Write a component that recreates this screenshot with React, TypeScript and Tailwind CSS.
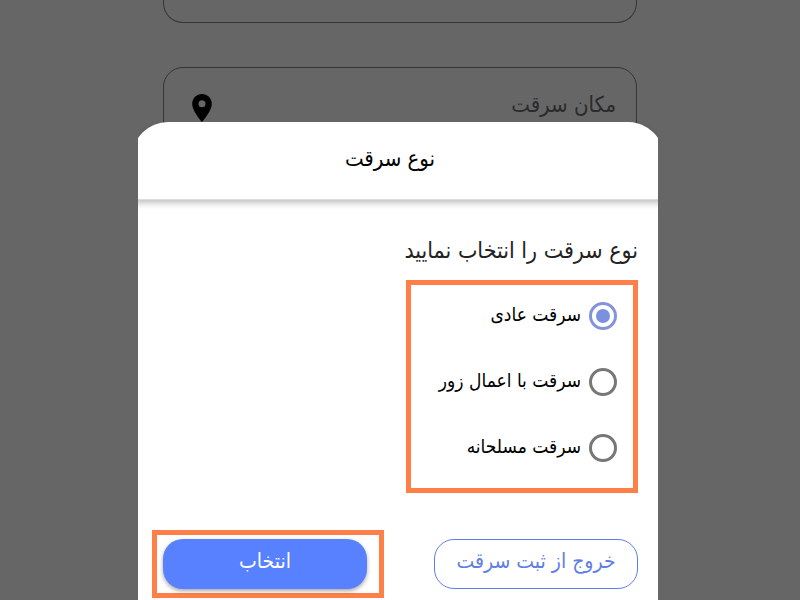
import { useState } from 'react'
import clsx from 'clsx'

const theftTypes = [
  { value: 'normal', label: 'سرقت عادی' },
  { value: 'force', label: 'سرقت با اعمال زور' },
  { value: 'armed', label: 'سرقت مسلحانه' },
]

const PinIcon = () => (
  <svg viewBox="5 2 14 20" className="h-7 w-5 shrink-0 text-black" fill="currentColor" aria-hidden="true">
    <path d="M12 2C8.13 2 5 5.13 5 9c0 5.25 7 13 7 13s7-7.75 7-13c0-3.87-3.13-7-7-7zm0 9.5a2.5 2.5 0 0 1 0-5 2.5 2.5 0 0 1 0 5z" />
  </svg>
)

const ReportForm = () => (
  <form className="mx-auto flex w-full max-w-[474px] flex-col gap-11">
    <div className="h-[23px] rounded-b-[20px] border border-t-0 border-[#363636]" />
    <div className="flex h-[82px] items-center gap-4 rounded-[20px] border border-[#363636] px-5">
      <input
        type="text"
        aria-label="مکان سرقت"
        placeholder="مکان سرقت"
        className="min-w-0 flex-1 bg-transparent pb-2 text-[22px] text-[#2b2b2b] outline-none placeholder:text-[#2b2b2b]"
      />
      <div className="px-2">
        <PinIcon />
      </div>
    </div>
  </form>
)

const TheftTypeSheet = () => {
  const [selected, setSelected] = useState('normal')

  return (
    <div className="fixed inset-x-0 bottom-0 flex justify-center pr-1">
      <section
        role="dialog"
        aria-label="نوع سرقت"
        className="w-full max-w-[520px] overflow-hidden"
      >
        <div className="-mx-1.5 rounded-t-[36px] bg-white px-1.5">
          <header className="-mx-1.5 rounded-t-[36px] border-b border-[#dddddd] pt-[23px] pr-4 pb-[26px] text-center shadow-[0_3px_6px_rgba(0,0,0,0.25)]">
            <h1 className="text-[22px] leading-7 text-black">نوع سرقت</h1>
          </header>

          <fieldset className="pr-5">
            <legend className="pt-8 text-[23px] leading-9 text-[#222222]">
              نوع سرقت را انتخاب نمایید
            </legend>
            <div className="mt-3 flex w-[232px] flex-col gap-[38px] border-[5px] border-[#ff7f48] pt-[17px] pr-4 pb-[26px]">
              {theftTypes.map((type) => (
                <label key={type.value} className="flex items-center gap-2 text-[19px] leading-6 text-black">
                  <input
                    type="radio"
                    name="theft-type"
                    value={type.value}
                    checked={selected === type.value}
                    onChange={() => setSelected(type.value)}
                    className="sr-only"
                  />
                  <span
                    className={clsx(
                      'flex size-7 shrink-0 items-center justify-center rounded-full border-3',
                      selected === type.value ? 'border-[#8494dc]' : 'border-[#777777]',
                    )}
                  >
                    {selected === type.value && <span className="size-3.5 rounded-full bg-[#7b91e0]" />}
                  </span>
                  <span className="pb-1">{type.label}</span>
                </label>
              ))}
            </div>
          </fieldset>

          <div className="flex items-center justify-between pt-[37px] pr-5 pb-0.5 pl-3.5">
            <button
              type="button"
              className="h-[50px] w-[204px] rounded-[20px] border border-[#5f7ee6] pb-1 text-[21px] text-[#5f7ee6]"
            >
              خروج از ثبت سرقت
            </button>
            <div className="flex w-[232px] border-[5px] border-[#ff7f48] pt-1 pr-3 pb-1 pl-1.5">
              <button
                type="button"
                className="h-[50px] flex-1 rounded-[20px] bg-[#5881ff] pb-1 text-[21px] text-white shadow-[0_2px_4px_rgba(0,0,0,0.35)]"
              >
                انتخاب
              </button>
            </div>
          </div>
        </div>
      </section>
    </div>
  )
}

const App = () => (
  <main
    dir="rtl"
    lang="fa"
    className="min-h-screen bg-[#666666] font-['DejaVu_Sans_Condensed','DejaVu_Sans',sans-serif]"
  >
    <ReportForm />
    <TheftTypeSheet />
  </main>
)

export default App
